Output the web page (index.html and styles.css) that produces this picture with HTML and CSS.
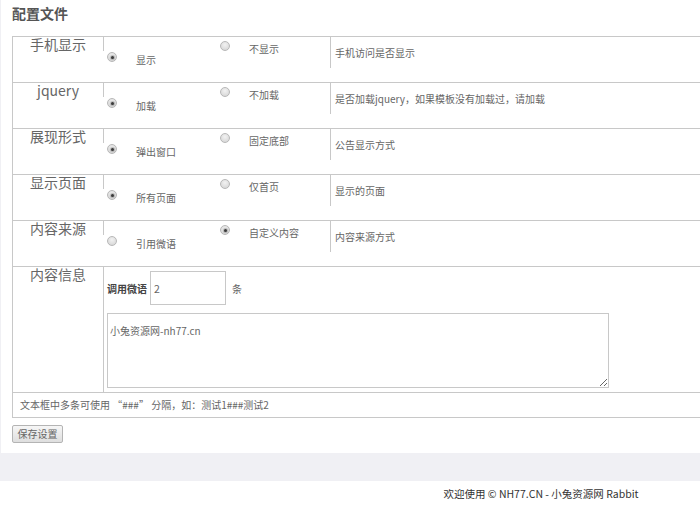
FILE: index.html
```html
<!DOCTYPE html>
<html lang="zh-CN">
<head>
<meta charset="utf-8">
<title>配置文件</title>
<link rel="stylesheet" href="styles.css">
</head>
<body>
<div class="panel">
  <h1 class="title">配置文件</h1>
  <div class="table">
    <div class="row">
      <div class="label">手机显示</div>
      <div class="opts">
        <div class="opt opt-low"><span class="radio checked"></span><span class="opt-text">显示</span></div>
        <div class="opt opt-high"><span class="radio"></span><span class="opt-text">不显示</span></div>
      </div>
      <div class="desc">手机访问是否显示</div>
    </div>
    <div class="row">
      <div class="label">jquery</div>
      <div class="opts">
        <div class="opt opt-low"><span class="radio checked"></span><span class="opt-text">加载</span></div>
        <div class="opt opt-high"><span class="radio"></span><span class="opt-text">不加载</span></div>
      </div>
      <div class="desc">是否加载jquery，如果模板没有加载过，请加载</div>
    </div>
    <div class="row">
      <div class="label">展现形式</div>
      <div class="opts">
        <div class="opt opt-low"><span class="radio checked"></span><span class="opt-text">弹出窗口</span></div>
        <div class="opt opt-high"><span class="radio"></span><span class="opt-text">固定底部</span></div>
      </div>
      <div class="desc">公告显示方式</div>
    </div>
    <div class="row">
      <div class="label">显示页面</div>
      <div class="opts">
        <div class="opt opt-low"><span class="radio checked"></span><span class="opt-text">所有页面</span></div>
        <div class="opt opt-high"><span class="radio"></span><span class="opt-text">仅首页</span></div>
      </div>
      <div class="desc">显示的页面</div>
    </div>
    <div class="row">
      <div class="label">内容来源</div>
      <div class="opts">
        <div class="opt opt-low"><span class="radio"></span><span class="opt-text">引用微语</span></div>
        <div class="opt opt-high"><span class="radio checked"></span><span class="opt-text">自定义内容</span></div>
      </div>
      <div class="desc">内容来源方式</div>
    </div>
    <div class="row row-info">
      <div class="label label-full">内容信息</div>
      <div class="info">
        <div class="info-line">
          <b class="info-name">调用微语</b>
          <input class="num" type="text" value="2">
          <span class="unit">条</span>
        </div>
        <textarea class="content">小兔资源网-nh77.cn</textarea>
      </div>
    </div>
    <div class="note">文本框中多条可使用 “###” 分隔，如：测试1###测试2</div>
  </div>
  <button class="save" type="button">保存设置</button>
</div>
<div class="band"></div>
<div class="footer">欢迎使用 © NH77.CN - 小兔资源网 Rabbit</div>
</body>
</html>
```

FILE: styles.css
```css
html, body {
  margin: 0;
  padding: 0;
  overflow: hidden;
}
body {
  background: #f0f0f4;
  font-family: "Noto Sans CJK SC", "Noto Sans", sans-serif;
  font-size: 10px;
  color: #666;
}
.panel {
  background: #fff;
  margin-left: 1px;
  padding: 0 0 10px 11px;
  overflow: hidden;
  height: 453px;
  box-sizing: border-box;
}
.title {
  margin: 0;
  padding-top: 4px;
  height: 36px;
  box-sizing: border-box;
  font-size: 14px;
  line-height: 18px;
  font-weight: bold;
  color: #555;
}
.table {
  width: 720px;
  border: 1px solid #c8c8c8;
}
.row {
  display: flex;
  height: 45px;
  border-bottom: 1px solid #c8c8c8;
}
.label {
  width: 90px;
  height: 14px;
  line-height: 15px;
  text-align: center;
  font-size: 14px;
  color: #666;
  border-right: 1px solid #c8c8c8;
  flex: none;
}
.label-full {
  height: auto;
}
.opts {
  display: flex;
  width: 226px;
  flex: none;
}
.opt {
  display: flex;
  align-items: flex-start;
  width: 114px;
  padding-left: 3px;
  box-sizing: border-box;
}
.opt-low { padding-top: 15px; }
.opt-high { padding-top: 4px; }
.radio {
  width: 10px;
  height: 10px;
  border-radius: 50%;
  border: 1px solid #b8b8b8;
  box-sizing: border-box;
  background: radial-gradient(circle at 50% 35%, #f2f2f2 0%, #d2d2d2 100%);
  flex: none;
  position: relative;
}
.radio.checked::after {
  content: "";
  position: absolute;
  left: 2.5px;
  top: 2.5px;
  width: 3px;
  height: 3px;
  border-radius: 50%;
  background: #3a3a3a;
  box-shadow: 0 0 1px 1px rgba(80,80,80,0.35);
}
.opt-text {
  margin-left: 19px;
  margin-top: 1px;
  line-height: 13px;
  white-space: nowrap;
}
.desc {
  align-self: flex-start;
  border-left: 1px solid #c8c8c8;
  padding: 9px 0 9px 4px;
  line-height: 13px;
  white-space: nowrap;
}
.row-info {
  height: 125px;
}
.info {
  padding: 4px 0 0 3px;
}
.info-line {
  display: flex;
  align-items: center;
}
.info-name {
  color: #444;
  font-weight: bold;
}
.num {
  margin: 0 0 0 3px;
  width: 76px;
  height: 34px;
  box-sizing: border-box;
  border: 1px solid #c8c8c8;
  padding: 0 3px;
  font-family: inherit;
  font-size: 10.5px;
  color: #666;
  outline: none;
}
.unit {
  margin-left: 6px;
}
.content {
  display: block;
  margin: 8px 0 0 0;
  width: 502px;
  height: 75px;
  box-sizing: border-box;
  border: 1px solid #c8c8c8;
  padding: 10px 2px;
  font-family: inherit;
  font-size: 10px;
  line-height: 14px;
  color: #666;
  outline: none;
}
.note {
  height: 24px;
  line-height: 24px;
  padding-left: 7px;
  color: #666;
}
.save {
  display: block;
  margin-top: 7px;
  width: 51px;
  height: 18px;
  padding: 0;
  border: 1px solid #b4b4b4;
  border-radius: 2px;
  background: linear-gradient(#f6f6f6, #dedede);
  font-family: inherit;
  font-size: 10px;
  line-height: 16px;
  color: #666;
}
.band {
  height: 28px;
}
.footer {
  background: #fff;
  height: 25px;
  line-height: 25px;
  font-size: 10.5px;
  padding-left: 382px;
  text-align: center;
  color: #333;
}
```
